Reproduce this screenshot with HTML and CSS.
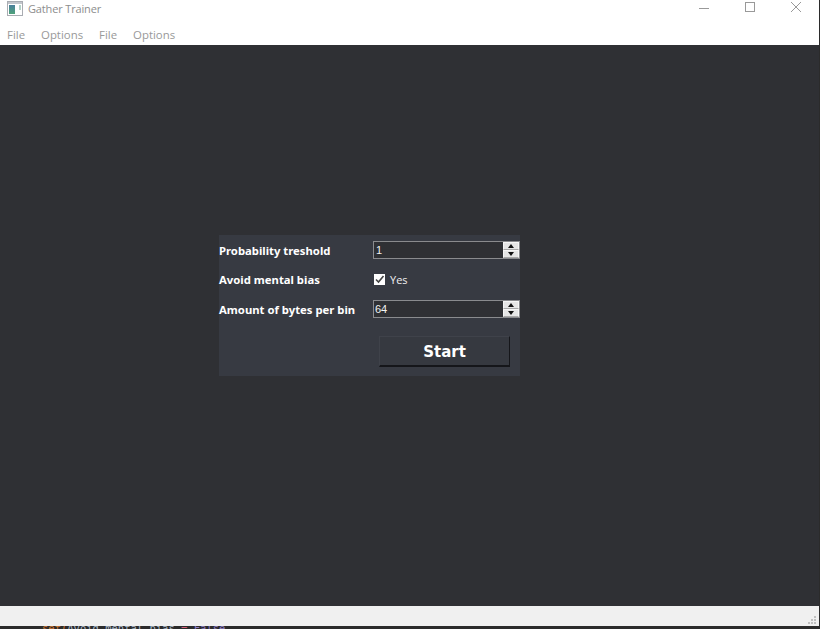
FILE: index.html
```html
<!DOCTYPE html>
<html lang="en">
<head>
<meta charset="utf-8">
<title>Gather Trainer</title>
<link rel="stylesheet" href="styles.css">
</head>
<body>
<div class="window">
  <header class="titlebar">
    <svg class="app-icon" width="16" height="16" viewBox="0 0 16 16">
      <defs>
        <linearGradient id="pane" x1="0" y1="0" x2="0" y2="1">
          <stop offset="0" stop-color="#4a7f9c"/>
          <stop offset="1" stop-color="#4fa27a"/>
        </linearGradient>
      </defs>
      <rect x="0.5" y="0.5" width="15" height="14" fill="#fff" stroke="#a9acb2"/>
      <rect x="1" y="1" width="14" height="2" fill="#c3c6cc"/>
      <rect x="2" y="4" width="6" height="9" fill="url(#pane)"/>
      <rect x="12" y="4" width="2" height="5" fill="#b5d3c8"/>
    </svg>
    <span class="title">Gather Trainer</span>
    <div class="controls">
      <svg width="12" height="12" viewBox="0 0 12 12"><path d="M1 7.5H11" stroke="#999" fill="none"/></svg>
      <svg width="12" height="12" viewBox="0 0 12 12"><rect x="1.5" y="1.5" width="9" height="9" stroke="#999" fill="none"/></svg>
      <svg width="12" height="12" viewBox="0 0 12 12"><path d="M1 1L11 11M11 1L1 11" stroke="#999" fill="none"/></svg>
    </div>
  </header>
  <nav class="menubar">
    <span>File</span><span>Options</span><span>File</span><span>Options</span>
  </nav>
  <main class="content">
    <form class="panel">
      <label class="field-label">Probability treshold</label>
      <div class="spinbox">
        <span class="spin-value first">1</span>
        <div class="spin-buttons">
          <span class="spin-btn"><i class="arrow up"></i></span>
          <span class="spin-btn"><i class="arrow down"></i></span>
        </div>
      </div>
      <label class="field-label">Avoid mental bias</label>
      <div class="check">
        <span class="checkbox">
          <svg width="11" height="11" viewBox="0 0 11 11"><path d="M2 5.5L4.5 8L9.5 2" stroke="#444" stroke-width="1.6" fill="none"/></svg>
        </span>
        <span>Yes</span>
      </div>
      <label class="field-label">Amount of bytes per bin</label>
      <div class="spinbox">
        <span class="spin-value">64</span>
        <div class="spin-buttons">
          <span class="spin-btn"><i class="arrow up"></i></span>
          <span class="spin-btn"><i class="arrow down"></i></span>
        </div>
      </div>
      <button class="start" type="button">Start</button>
    </form>
  </main>
  <footer class="statusbar">
    <svg class="grip" width="8" height="8" viewBox="0 0 8 8" fill="#c0c0c0">
      <rect x="6" y="0" width="2" height="2"/>
      <rect x="3" y="3" width="2" height="2"/><rect x="6" y="3" width="2" height="2"/>
      <rect x="0" y="6" width="2" height="2"/><rect x="3" y="6" width="2" height="2"/><rect x="6" y="6" width="2" height="2"/>
    </svg>
  </footer>
  <div class="behind"><code><b class="kw">set(</b>Avoid mental bias <b class="eq">=</b> <b class="val">False</b></code></div>
</div>
</body>
</html>
```
FILE: styles.css
```css
* { box-sizing: border-box; }
html, body { margin: 0; height: 100%; overflow: hidden; }
body { background: #2b2b2b; }
.window {
  width: 819px;
  height: 629px;
  display: flex;
  flex-direction: column;
  background: #fff;
  font-family: "Open Sans", sans-serif;
}
.titlebar {
  height: 24px;
  flex: none;
  display: flex;
  align-items: flex-start;
  padding: 1px 0 0 7px;
  color: #8d8d8d;
  font-size: 11px;
}
.app-icon { flex: none; }
.title { margin-left: 5px; line-height: 16px; letter-spacing: -0.15px; }
.controls { margin-left: auto; display: flex; gap: 34px; padding-right: 17px; }
.menubar {
  height: 21px;
  flex: none;
  display: flex;
  gap: 16px;
  padding: 3px 0 0 7px;
  color: #999;
  font-size: 11.4px;
  line-height: 16px;
}
.content {
  flex: 1;
  background: #2f3034;
  padding: 190px 0 0 219px;
}
.panel {
  width: 301px;
  height: 141px;
  background: #373a42;
  display: grid;
  grid-template-columns: 154px 147px;
  grid-auto-rows: 18px;
  row-gap: 11.5px;
  padding-top: 6px;
  align-items: center;
  color: #fff;
  font-family: "Noto Sans", sans-serif;
  font-size: 11.3px;
}
.field-label { font-weight: 700; white-space: nowrap; }
.spinbox {
  height: 18px;
  display: flex;
  border: 1px solid #8a8b8e;
  background: #2f3034;
}
.spin-value { flex: 1; padding-left: 1px; line-height: 17px; font-family: "Liberation Sans", sans-serif; font-size: 11px; color: #f2f2f2; }
.spin-value.first { padding-left: 2px; }
.spin-buttons { width: 16px; display: flex; flex-direction: column; background: #e6e6e6; }
.spin-btn { flex: 1; display: flex; align-items: center; justify-content: center; border: 1px solid #f6f6f6; border-bottom-color: #a8a8a8; }
.arrow { width: 0; height: 0; border-left: 3.5px solid transparent; border-right: 3.5px solid transparent; }
.arrow.up { border-bottom: 4px solid #111; }
.arrow.down { border-top: 4px solid #111; }
.check { display: flex; align-items: center; gap: 5px; padding-left: 1px; font-family: "Open Sans", sans-serif; font-size: 11px; color: #f0f0f0; }
.checkbox { width: 11px; height: 11px; background: #fff; display: block; line-height: 0; }
.start {
  grid-column: 2;
  width: 131px;
  height: 31px;
  margin: 6px 0 0 6px;
  align-self: start;
  background: #363940;
  color: #fff;
  border: 0;
  border-top: 1px solid #3f424a;
  border-left: 1px solid #3f424a;
  border-right: 1px solid #15161a;
  border-bottom: 2px solid #15161a;
  font-family: "DejaVu Sans", sans-serif;
  font-weight: 700;
  font-size: 15px;
  padding: 2px 0 0;
}
.statusbar {
  height: 20px;
  flex: none;
  background: #f0f0f0;
  display: flex;
  justify-content: flex-end;
  align-items: flex-end;
  padding: 0 3px 2px 0;
}
.behind {
  height: 3px;
  flex: none;
  background: #2b2b2b;
  overflow: hidden;
  padding-left: 42px;
  font-size: 10.5px;
  line-height: 12px;
  color: #a9b7c6;
}
.behind code { display: block; margin-top: -4px; font-family: "DejaVu Sans Mono", monospace; white-space: pre; }
.behind b { font-weight: 400; }
.kw { color: #cc7832; }
.eq { color: #d0607a; }
.val { color: #8e7cc3; }
```
